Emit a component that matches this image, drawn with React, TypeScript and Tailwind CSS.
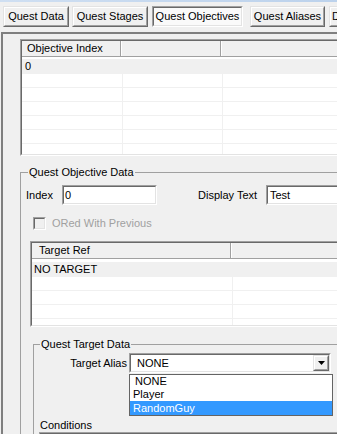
import React from "react";

type BoxProps = { className?: string; inner?: string; children?: React.ReactNode };

const Sunken = ({ className = "", inner = "", children }: BoxProps) => (
  <div className={`border border-t-[#a0a0a0] border-l-[#a0a0a0] border-b-white border-r-white ${className}`}>
    <div className={`h-full w-full border border-t-[#696969] border-l-[#696969] border-b-[#e3e3e3] border-r-[#e3e3e3] ${inner}`}>
      {children}
    </div>
  </div>
);

const Raised = ({ className = "", inner = "", children }: BoxProps) => (
  <div className={`border border-t-[#e3e3e3] border-l-[#e3e3e3] border-b-[#696969] border-r-[#696969] ${className}`}>
    <div className={`h-full w-full border border-t-white border-l-white border-b-[#a0a0a0] border-r-[#a0a0a0] ${inner}`}>
      {children}
    </div>
  </div>
);

const tabs = [
  { label: "Quest Data", w: "w-[66px]", ml: "ml-0" },
  { label: "Quest Stages", w: "w-[76px]", ml: "ml-[3px]" },
  { label: "Quest Objectives", w: "w-[91px]", ml: "ml-[4px]", active: true },
  { label: "Quest Aliases", w: "w-[75px]", ml: "ml-[7px]" },
];

const Tab = ({ label, w, ml, active }: { label: string; w: string; ml: string; active?: boolean }) =>
  active ? (
    <Sunken className={`${w} ${ml} h-[21px] shrink-0`} inner="flex items-center justify-center bg-[#fafafa]">
      {label}
    </Sunken>
  ) : (
    <Raised className={`${w} ${ml} h-[21px] shrink-0`} inner="flex items-center justify-center bg-[#f0f0f0]">
      {label}
    </Raised>
  );

const App = () => {
  return (
    <div className="w-[337px] h-[434px] overflow-hidden bg-[#f0f0f0] text-[11px] leading-[13px] text-black font-['Liberation_Sans',Arial,sans-serif]">
      <div className="h-[2px] bg-gradient-to-r from-[#cfdff2] to-[#bcd2ec]" />

      {/* tab strip */}
      <div className="mt-[4px] pl-[3px] flex w-[400px] overflow-hidden">
        {tabs.map((t) => (
          <Tab key={t.label} {...t} />
        ))}
        {/* next tab, cut by the window edge */}
        <Raised className="ml-[4px] w-[40px] h-[21px] shrink-0" inner="flex items-center pl-[1px] bg-[#f0f0f0]">
          D
        </Raised>
      </div>

      {/* tab page */}
      <div className="mt-[5px] ml-[1px] w-[420px] h-[420px] border-t-2 border-l-2 border-t-[#7f7f7f] border-l-[#7f7f7f] pl-[17px] pt-[5px]">
        {/* objective list */}
        <Sunken className="w-[400px] h-[117px]" inner="bg-white overflow-hidden">
          <div className="flex h-[16px] border-b border-[#a0a0a0] bg-[#f0f0f0]">
            <div className="w-[99px] border-r border-[#a0a0a0] pl-[5px] flex items-center">Objective Index</div>
            <div className="w-[100px] border-l border-white border-r border-r-[#a0a0a0]" />
            <div className="flex-1 border-l border-white" />
          </div>
          <div className="pt-[2px]">
            <div className="h-[14px] bg-[#f0f0f0] pl-[3px] flex items-center">0</div>
            {[0, 1, 2, 3, 4, 5].map((i) => (
              <div key={i} className="h-[14px] flex border-t border-[#f0f0f0]">
                <div className="w-[101px] border-r border-[#f0f0f0]" />
                <div className="w-[100px] border-r border-[#f0f0f0]" />
              </div>
            ))}
          </div>
        </Sunken>

        {/* Quest Objective Data */}
        <fieldset className="mt-[10px] w-[400px] h-[300px] border-t border-l border-[#a0a0a0] p-0">
          <legend className="ml-[7px] px-[1px] leading-[13px]">Quest Objective Data</legend>

          <div className="mt-[6px] ml-[5px] flex items-center">
            <span className="w-[36px]">Index</span>
            <Sunken className="w-[95px] h-[20px]" inner="bg-white pl-[1px] flex items-center">
              0
            </Sunken>
            <span className="ml-[41px] w-[68px]">Display Text</span>
            <Sunken className="w-[120px] h-[20px]" inner="bg-white pl-[2px] flex items-center">
              Test
            </Sunken>
          </div>

          <div className="mt-[12px] ml-[12px] flex items-center">
            <Sunken className="w-[13px] h-[13px]" inner="bg-[#f0f0f0]" />
            <span className="ml-[6px] text-[#a0a0a0]">ORed With Previous</span>
          </div>

          {/* target ref list */}
          <Sunken className="mt-[11px] ml-[9px] w-[380px] h-[86px]" inner="bg-white overflow-hidden">
            <div className="flex h-[16px] border-b border-[#a0a0a0] bg-[#f0f0f0]">
              <div className="w-[199px] border-r border-[#a0a0a0] pl-[7px] flex items-center">Target Ref</div>
              <div className="flex-1 border-l border-white" />
            </div>
            <div className="pt-[3px]">
              <div className="h-[14px] bg-[#f0f0f0] pl-[2px] flex items-center">NO TARGET</div>
              {[0, 1, 2, 3].map((i) => (
                <div key={i} className="h-[14px] flex border-t border-[#f0f0f0]">
                  <div className="w-[201px] border-r border-[#f0f0f0]" />
                </div>
              ))}
            </div>
          </Sunken>

          {/* Quest Target Data */}
          <fieldset className="mt-[11px] ml-[12px] w-[380px] h-[200px] border-t border-l border-[#a0a0a0] p-0">
            <legend className="ml-[6px] px-[1px] leading-[13px]">Quest Target Data</legend>

            <div className="mt-[2px] flex items-center">
              <span className="w-[93px] text-right">Target Alias</span>
              <div className="relative ml-[2px]">
                <Sunken className="w-[202px] h-[20px]" inner="bg-white flex items-center">
                  <span className="flex-1 pl-[6px]">NONE</span>
                  <Raised className="w-[16px] h-[16px]" inner="bg-[#f0f0f0] flex items-center justify-center">
                    <svg width="7" height="4" viewBox="0 0 7 4">
                      <path d="M0 0H7L3.5 4Z" fill="#000" />
                    </svg>
                  </Raised>
                </Sunken>
                {/* open dropdown */}
                <div className="absolute top-[21px] left-0 w-[204px] h-[42px] border border-[#646464] bg-white z-10">
                  <div className="h-[13px] pl-[5px] flex items-center">NONE</div>
                  <div className="h-[13px] pl-[3px] flex items-center">Player</div>
                  <div className="h-[14px] pl-[3px] flex items-center bg-[#3399ff] text-white">RandomGuy</div>
                </div>
              </div>
            </div>

            <div className="mt-[46px] ml-[6px]">Conditions</div>
            <Sunken className="ml-[5px] w-[340px] h-[40px]" inner="bg-white" />
          </fieldset>
        </fieldset>
      </div>
    </div>
  );
};

export default App;
